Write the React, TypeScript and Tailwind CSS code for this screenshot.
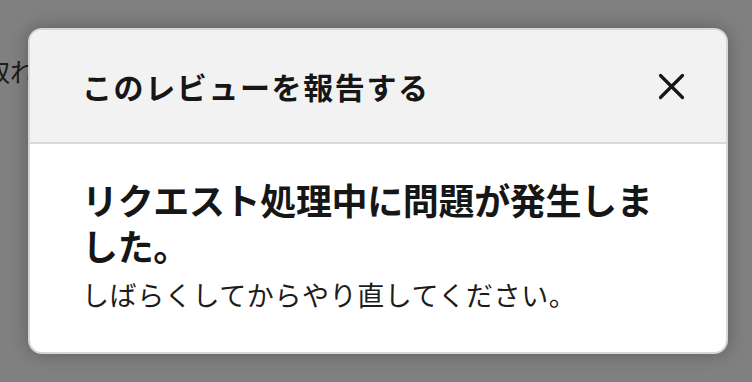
import React from "react";

export default function App() {
  return (
    <div
      className="relative h-[382px] w-[752px] overflow-hidden bg-[#808080]"
      style={{ fontFamily: '"Noto Sans CJK JP", "Noto Sans", sans-serif' }}
    >
      <p className="ml-[-16px] mt-[54px] whitespace-nowrap text-[26px] leading-[34px] text-[#1c1c1c]">
        取れ
      </p>
      <div className="absolute left-[28px] top-[28px] flex w-[700px] flex-col overflow-hidden rounded-[14px] border-2 border-[#d6d6d6] bg-white shadow-[0_0_18px_rgba(0,0,0,0.28)]">
        <div className="flex h-[114px] items-center justify-between border-b-2 border-[#d9d9d9] bg-[#f2f2f2] pl-[52px] pr-[41px]">
          <h2 className="text-[30px] font-bold leading-[40px] tracking-[1.6px] text-[#161616]">
            このレビューを報告する
          </h2>
          <svg width="27" height="27" viewBox="0 0 27 27" className="text-[#161616]">
            <path d="M2.5 2.5 L24.5 24.5 M24.5 2.5 L2.5 24.5" stroke="currentColor" strokeWidth="3.2" strokeLinecap="round" fill="none" />
          </svg>
        </div>
        <div className="px-[52px] pb-[38px] pt-[32px]">
          <h3 className="text-[36px] font-bold leading-[46px] tracking-[-0.35px] text-[#161616]">
            リクエスト処理中に問題が発生しました。
          </h3>
          <p className="mt-[8px] text-[27px] leading-[38px] tracking-[0.6px] text-[#1c1c1c]">
            しばらくしてからやり直してください。
          </p>
        </div>
      </div>
    </div>
  );
}
